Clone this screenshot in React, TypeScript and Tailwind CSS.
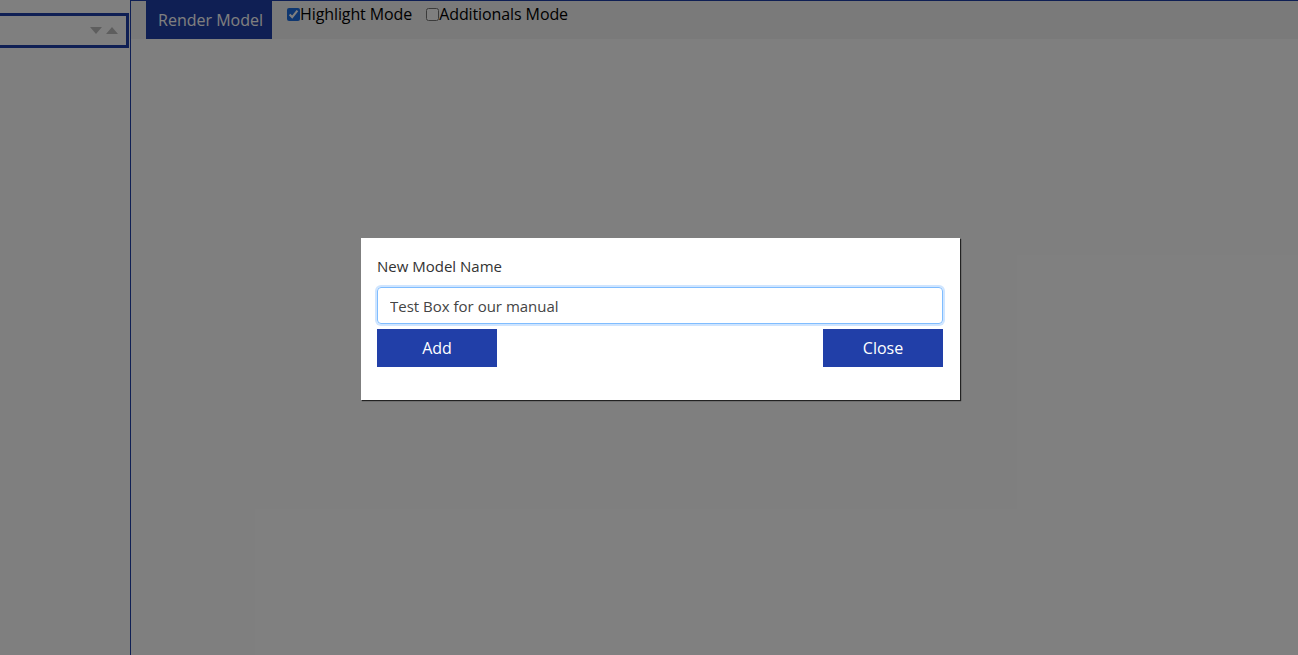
import { useState } from "react";

export default function App() {
  const [name, setName] = useState("Test Box for our manual");
  const [highlight, setHighlight] = useState(true);
  const [additionals, setAdditionals] = useState(false);

  return (
    <div className="relative w-full h-screen overflow-hidden bg-white font-['Open_Sans','Noto_Sans',sans-serif]">
      <div className="flex h-full">
        {/* sidebar */}
        <aside className="w-[131px] shrink-0 border-r border-[#1f3fa8] pt-[13px] pr-[1px]">
          <div className="h-[35px] border-[3px] border-l-0 border-[#1f3fa8] flex items-center justify-end pr-[8px] gap-[4px]">
            <span className="w-0 h-0 border-l-[6px] border-r-[6px] border-t-[7px] border-l-transparent border-r-transparent border-t-[#bdbdbd]" />
            <span className="w-0 h-0 border-l-[6px] border-r-[6px] border-b-[7px] border-l-transparent border-r-transparent border-b-[#bdbdbd]" />
          </div>
        </aside>

        {/* main */}
        <main className="flex-1 flex flex-col border-t border-[#1f3fa8]">
          <div className="h-[38px] bg-[#f4f4f4] flex items-start pl-[15px]">
            <button className="h-[38px] w-[126px] bg-[#1f3fa8] text-white text-[16px] pl-[3px]">
              Render Model
            </button>
            <label className="ml-[15px] mt-[2px] flex items-center text-[16px] text-black leading-[22px] tracking-[-0.1px]">
              <input
                type="checkbox"
                checked={highlight}
                onChange={(e) => setHighlight(e.target.checked)}
                className="w-[13px] h-[13px] m-0 accent-[#1f6fe0]"
              />
              Highlight Mode
            </label>
            <label className="ml-[14px] mt-[2px] flex items-center text-[16px] text-black leading-[22px] tracking-[-0.1px]">
              <input
                type="checkbox"
                checked={additionals}
                onChange={(e) => setAdditionals(e.target.checked)}
                className="w-[13px] h-[13px] m-0"
              />
              Additionals Mode
            </label>
          </div>
          <div className="flex-1" />
        </main>
      </div>

      {/* overlay */}
      <div className="absolute inset-0 bg-black/50" />

      {/* dialog */}
      <div className="absolute left-[361px] top-[238px] w-[599px] h-[162px] bg-white shadow-[1px_1px_1px_#222] px-[16px] pt-[18px]">
        <div className="text-[15px] text-[#333] leading-[20px]">New Model Name</div>
        <input
          value={name}
          onChange={(e) => setName(e.target.value)}
          className="mt-[11px] block w-[566px] h-[37px] rounded-[4px] border border-[#80bdff] shadow-[0_0_0_2px_#cfe5ff] px-[12px] text-[15px] text-[#444] outline-none"
        />
        <div className="mt-[5px] flex justify-between w-[566px]">
          <button className="w-[120px] h-[38px] bg-[#213fa8] text-white text-[16px]">Add</button>
          <button className="w-[120px] h-[38px] bg-[#213fa8] text-white text-[16px]">Close</button>
        </div>
      </div>
    </div>
  );
}
